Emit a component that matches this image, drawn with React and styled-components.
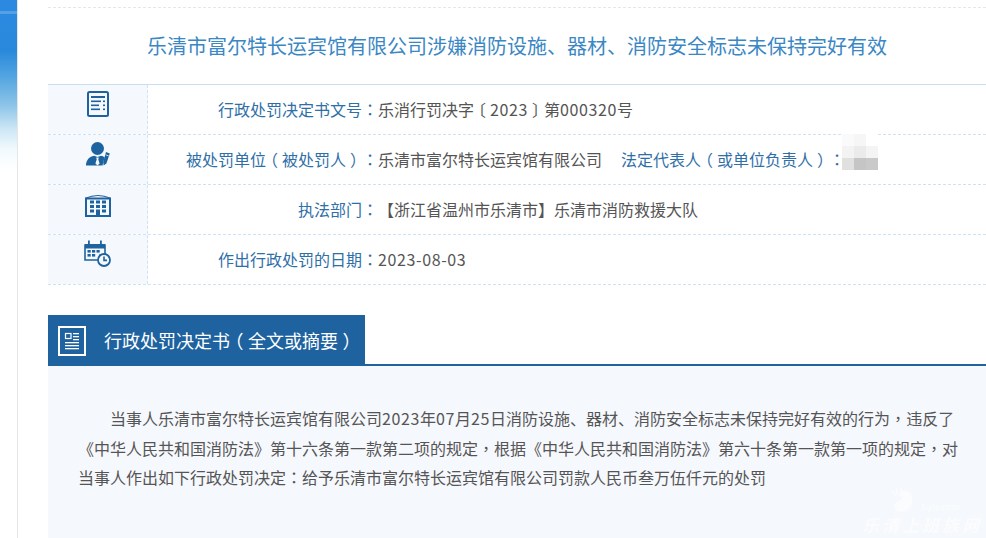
import React from "react";
import styled, { createGlobalStyle } from "styled-components";

const GlobalStyle = createGlobalStyle`
  html, body {
    margin: 0;
    padding: 0;
    height: 538px;
    overflow: hidden;
    background: #fff;
    font-family: "Noto Sans CJK SC", "Liberation Sans", sans-serif;
    text-spacing-trim: space-all;
  }
`;

const DocIcon = () => (
  <svg width="22" height="26" viewBox="0 0 22 26">
    <rect x="1" y="1" width="20" height="24" rx="1.5" fill="none" stroke="#1e639f" strokeWidth="2" />
    <rect x="4" y="5" width="14" height="2" fill="#1e639f" />
    <rect x="4" y="9.5" width="10" height="1.6" fill="#1e639f" />
    <rect x="16" y="9.5" width="2" height="1.6" fill="#1e639f" />
    <rect x="4" y="13.5" width="8" height="1.6" fill="#1e639f" />
    <rect x="16" y="13.5" width="2" height="1.6" fill="#1e639f" />
    <rect x="4" y="17.5" width="9" height="1.6" fill="#1e639f" />
    <rect x="16" y="17.5" width="2" height="1.6" fill="#1e639f" />
  </svg>
);

const PersonIcon = () => (
  <svg width="24" height="24" viewBox="0 0 24 24">
    <circle cx="11.5" cy="6.5" r="6.5" fill="#1e639f" />
    <path d="M0 23.5 C0 18 3.5 14.5 8 13.8 L11.5 15 L15 13.8 C16.5 14.1 17.5 14.6 18.5 15.3 L16.5 23.5 Z" fill="#1e639f" />
    <path d="M10.2 15.5 H12.8 L12.3 17.5 L13.6 21.5 L11.5 23.5 L9.4 21.5 L10.7 17.5 Z" fill="#f5f9fe" />
    <path d="M20 10 L23.8 11.5 L20.4 21.5 L17.6 23.6 L17.2 20 Z" fill="#1e639f" />
    <path d="M19.6 12.8 L22.8 14" stroke="#f5f9fe" strokeWidth="0.8" />
  </svg>
);

const BuildingIcon = () => (
  <svg width="26" height="23" viewBox="0 0 26 23">
    <path d="M0.5 4.2 Q13 -1.2 25.5 4.2" fill="none" stroke="#1e639f" strokeWidth="1.2" />
    <rect x="1" y="4.5" width="24" height="17.5" fill="#f5f9fe" stroke="#1e639f" strokeWidth="2" />
    <g fill="#1e639f">
      <rect x="5" y="6.5" width="4" height="3" />
      <rect x="11" y="6.5" width="4" height="3" />
      <rect x="17" y="6.5" width="4" height="3" />
      <rect x="5" y="11" width="4" height="3" />
      <rect x="11" y="11" width="4" height="3" />
      <rect x="17" y="11" width="4" height="3" />
      <rect x="5" y="15.5" width="4" height="3" />
      <rect x="11" y="15.5" width="4" height="7" />
      <rect x="17" y="15.5" width="4" height="3" />
    </g>
  </svg>
);

const CalendarIcon = () => (
  <svg width="27" height="27" viewBox="0 0 27 27">
    <path d="M1 5 H21 V15 H16 V20 H1 Z" fill="none" stroke="#1e639f" strokeWidth="1.6" />
    <rect x="1" y="4" width="20" height="4.5" fill="#1e639f" />
    <rect x="4" y="0.5" width="1.8" height="5.5" fill="#1e639f" />
    <rect x="16" y="0.5" width="1.8" height="5.5" fill="#1e639f" />
    <g fill="#1e639f">
      <rect x="3.5" y="10" width="3.2" height="2.6" />
      <rect x="8" y="10" width="3.2" height="2.6" />
      <rect x="12.5" y="10" width="3.2" height="2.6" />
      <rect x="3.5" y="14" width="3.2" height="2.6" />
      <rect x="8" y="14" width="3.2" height="2.6" />
    </g>
    <circle cx="20" cy="20" r="6" fill="#f5f9fe" stroke="#1e639f" strokeWidth="1.8" />
    <path d="M20 16.5 V20.4 H23" fill="none" stroke="#1e639f" strokeWidth="1.6" />
  </svg>
);

const ArticleIcon = () => (
  <svg width="28" height="30" viewBox="0 0 28 30">
    <rect x="1" y="1" width="26" height="28" fill="none" stroke="#fff" strokeWidth="2" />
    <rect x="7.5" y="7.5" width="5.5" height="5" fill="none" stroke="#fff" strokeWidth="1.2" />
    <g fill="#fff">
      <rect x="15" y="7" width="6" height="1.3" />
      <rect x="15" y="10" width="6" height="1.3" />
      <rect x="15" y="13" width="6" height="1.3" />
      <rect x="7" y="16" width="14" height="1.3" />
      <rect x="7" y="19" width="14" height="1.3" />
      <rect x="7" y="22" width="14" height="1.3" />
    </g>
  </svg>
);

const SwanMark = () => (
  <svg width="30" height="26" viewBox="0 0 34 28">
    <path d="M10 27 C2 25 3 16 10 15 C14 14 15 11 12 10 C10 9 10 5 15 4 C24 3 28 12 24 20 C22 25 16 28 10 27 Z" fill="#fff" opacity="0.8" />
    <path d="M2 4 L7 9 M7 1 L9 8 M13 0 L12 5" stroke="#fff" strokeWidth="1.4" fill="none" />
  </svg>
);

// 标点用居中字形，数字略宽
const Rich = ({ children }) =>
  children.split(/([，：]|[（）〔〕]|[0-9-]+)/).map((part, i) => {
    if (/^[，：]$/.test(part)) return <Punct key={i}>{part}</Punct>;
    if (/^[（）〔〕]$/.test(part)) return <Bracket key={i}>{part}</Bracket>;
    if (/^[0-9-]+$/.test(part)) return <Num key={i}>{part}</Num>;
    return part;
  });

const rows = [
  { icon: <DocIcon />, top: 6, label: "行政处罚决定书文号：", value: "乐消行罚决字〔2023〕第000320号" },
  {
    icon: <PersonIcon />,
    top: 7,
    label: "被处罚单位（被处罚人）：",
    value: "乐清市富尔特长运宾馆有限公司",
    extraLabel: "法定代表人（或单位负责人）：",
  },
  { icon: <BuildingIcon />, top: 9, label: "执法部门：", value: "【浙江省温州市乐清市】乐清市消防救援大队" },
  { icon: <CalendarIcon />, top: 5, label: "作出行政处罚的日期：", value: "2023-08-03" },
];

const patchColors = ["#fafafa", "#f6f6f6", "#ffffff", "#f3f3f3", "#ebebeb", "#f4f4f4", "#e0e0e0", "#c5c5c5", "#c9c9c9"];

const bodyLines = [
  "当事人乐清市富尔特长运宾馆有限公司2023年07月25日消防设施、器材、消防安全标志未保持完好有效的行为，违反了",
  "《中华人民共和国消防法》第十六条第一款第二项的规定，根据《中华人民共和国消防法》第六十条第一款第一项的规定，对",
  "当事人作出如下行政处罚决定：给予乐清市富尔特长运宾馆有限公司罚款人民币叁万伍仟元的处罚",
];

export default function App() {
  return (
    <Page>
      <GlobalStyle />
      <SideStrip />
      <Main>
        <Title>乐清市富尔特长运宾馆有限公司涉嫌消防设施、器材、消防安全标志未保持完好有效</Title>
        <InfoTable>
          {rows.map((row) => (
            <InfoRow key={row.label}>
              <IconCell $top={row.top}>{row.icon}</IconCell>
              <TextCell>
                <Label><Rich>{row.label}</Rich></Label>
                <Value><Rich>{row.value}</Rich></Value>
                {row.extraLabel && (
                  <>
                    <ExtraLabel><Rich>{row.extraLabel}</Rich></ExtraLabel>
                    <BlurPatch>
                      {patchColors.map((color, i) => (
                        <span key={i} style={{ background: color }} />
                      ))}
                    </BlurPatch>
                  </>
                )}
              </TextCell>
            </InfoRow>
          ))}
        </InfoTable>
        <SectionHead>
          <SectionTab>
            <ArticleIcon />
            <SectionName><Rich>行政处罚决定书（全文或摘要）</Rich></SectionName>
          </SectionTab>
        </SectionHead>
        <SectionBody>
          {bodyLines.map((line) => (
            <BodyLine key={line}><Rich>{line}</Rich></BodyLine>
          ))}
          <Watermark>
            <WatermarkLogo>
              <SwanMark />
              <WatermarkSite>5iyu.com</WatermarkSite>
            </WatermarkLogo>
            <WatermarkName>乐清上班族网</WatermarkName>
          </Watermark>
        </SectionBody>
      </Main>
    </Page>
  );
}

const Page = styled.div`
  display: flex;
  width: 986px;
  height: 538px;
  overflow: hidden;
`;

const SideStrip = styled.div`
  width: 17px;
  flex-shrink: 0;
  border-right: 1px solid #e6e6e6;
  background:
    linear-gradient(to bottom, transparent 11px, rgba(255, 255, 255, 0.2) 11px, rgba(255, 255, 255, 0.2) 14px, transparent 14px),
    linear-gradient(
      to bottom,
      #2b8ae0 0,
      #2a88dc 50px,
      #4fa3e0 75px,
      #8cc4e8 105px,
      #cfe8f6 130px,
      #f2fafd 150px,
      #ffffff 170px
    );
`;

const Main = styled.div`
  flex: 1;
  min-width: 0;
  padding: 7px 0 0 30px;
  display: flex;
  flex-direction: column;
`;

const Title = styled.h1`
  margin: 0;
  height: 76px;
  border-top: 1px dashed #e4e8ec;
  box-sizing: border-box;
  display: flex;
  align-items: center;
  padding-left: 99px;
  font-size: 20px;
  font-weight: 400;
  color: #3a87c4;
  white-space: nowrap;
`;

const InfoTable = styled.div`
  margin-top: 1px;
  border-top: 1px solid #c5e0f0;
`;

const InfoRow = styled.div`
  display: flex;
  height: 50px;
  box-sizing: border-box;
  border-bottom: 1px dashed #cfe2f3;
`;

const IconCell = styled.div`
  width: 100px;
  flex-shrink: 0;
  box-sizing: border-box;
  display: flex;
  justify-content: center;
  align-items: flex-start;
  padding-top: ${(props) => props.$top}px;
  background: #f5f9fe;
  border-right: 1px dashed #cfe2f3;
`;

const TextCell = styled.div`
  flex: 1;
  display: flex;
  align-items: center;
  font-size: 16px;
  white-space: nowrap;
  padding-bottom: 2px;
`;

const Punct = styled.span`
  font-family: "Noto Sans CJK TC", "Noto Sans CJK SC", sans-serif;
`;

const Bracket = styled.span`
  display: inline-block;
  width: 1em;
  text-align: center;
  font-feature-settings: "halt";
`;

const Num = styled.span`
  letter-spacing: 0.62px;
`;

const Label = styled.span`
  width: 230px;
  flex-shrink: 0;
  text-align: right;
  color: #2f6fa8;
`;

const Value = styled.span`
  color: #555;
`;

const ExtraLabel = styled.span`
  margin-left: 19px;
  color: #2f6fa8;
`;

const BlurPatch = styled.div`
  align-self: flex-start;
  display: grid;
  grid-template-columns: repeat(3, 12px);
  grid-auto-rows: 12px;
  margin-top: -1px;
  margin-left: -3px;
`;

const SectionHead = styled.div`
  margin-top: 30px;
  height: 51px;
  box-sizing: border-box;
  border-bottom: 2px solid #1e639f;
`;

const SectionTab = styled.div`
  width: 317px;
  height: 51px;
  box-sizing: border-box;
  background: #1e639f;
  display: flex;
  align-items: center;
  padding-left: 10px;
  gap: 18px;
`;

const SectionName = styled.span`
  font-size: 18px;
  color: #fff;
  white-space: nowrap;
  padding-bottom: 2px;
`;

const SectionBody = styled.div`
  position: relative;
  flex: 1;
  background: #f5f8fd;
  padding: 38px 0 0 30px;
`;

const BodyLine = styled.div`
  font-size: 16px;
  line-height: 29.5px;
  color: #555;
  white-space: nowrap;

  &:first-child {
    text-indent: 32px;
  }
`;

const Watermark = styled.div`
  position: absolute;
  right: 4px;
  bottom: 2px;
  display: flex;
  flex-direction: column;
  align-items: center;
  opacity: 0.7;
`;

const WatermarkLogo = styled.div`
  display: flex;
  align-items: flex-end;
  margin-left: 6px;
  margin-bottom: 1px;
`;

const WatermarkSite = styled.span`
  font-family: "Liberation Sans", sans-serif;
  font-size: 9px;
  font-weight: 700;
  font-style: italic;
  color: #fff;
  line-height: 12px;
`;

const WatermarkName = styled.span`
  font-size: 17px;
  line-height: 22px;
  font-weight: 700;
  font-style: italic;
  letter-spacing: 3px;
  color: #fff;
`;
